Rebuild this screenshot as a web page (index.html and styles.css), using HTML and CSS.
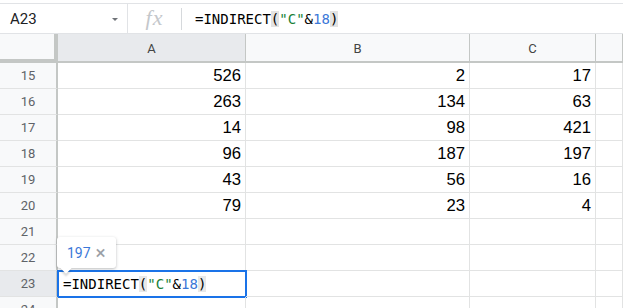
FILE: index.html
```html
<!DOCTYPE html>
<html lang="en">
<head>
    <meta charset="UTF-8">
    <meta name="viewport" content="width=device-width, initial-scale=1.0">
    <title>Sheet</title>
    <link rel="stylesheet" href="styles.css">
</head>
<body>
    <div class="formula-bar">
        <div class="name-box">
            <span class="cell-ref">A23</span>
            <span class="caret"></span>
        </div>
        <div class="fx">fx</div>
        <div class="fx-sep"></div>
        <div class="formula">=INDIRECT<span class="paren">(</span><span class="str">"C"</span>&amp;<span class="num">18</span><span class="paren">)</span></div>
    </div>

    <div class="sheet">
        <div class="grid">
            <div class="corner"></div>
            <div class="col-head active">A</div>
            <div class="col-head">B</div>
            <div class="col-head">C</div>
            <div class="col-head"></div>

            <div class="row-head">15</div><div class="cell">526</div><div class="cell">2</div><div class="cell">17</div><div class="cell"></div>
            <div class="row-head">16</div><div class="cell">263</div><div class="cell">134</div><div class="cell">63</div><div class="cell"></div>
            <div class="row-head">17</div><div class="cell">14</div><div class="cell">98</div><div class="cell">421</div><div class="cell"></div>
            <div class="row-head">18</div><div class="cell">96</div><div class="cell">187</div><div class="cell">197</div><div class="cell"></div>
            <div class="row-head">19</div><div class="cell">43</div><div class="cell">56</div><div class="cell">16</div><div class="cell"></div>
            <div class="row-head">20</div><div class="cell">79</div><div class="cell">23</div><div class="cell">4</div><div class="cell"></div>
            <div class="row-head">21</div><div class="cell"></div><div class="cell"></div><div class="cell"></div><div class="cell"></div>
            <div class="row-head">22</div><div class="cell"></div><div class="cell"></div><div class="cell"></div><div class="cell"></div>
            <div class="row-head active">23</div>
            <div class="cell editing">=INDIRECT<span class="paren">(</span><span class="str">"C"</span>&amp;<span class="num">18</span><span class="paren">)</span></div>
            <div class="cell"></div><div class="cell"></div><div class="cell"></div>
            <div class="row-head">24</div><div class="cell"></div><div class="cell"></div><div class="cell"></div><div class="cell"></div>
        </div>

        <div class="tooltip">
            <span class="tip-value">197</span>
            <span class="tip-close">&times;</span>
        </div>
    </div>
</body>
</html>
```

FILE: styles.css
```css
body {
    margin: 0;
    font-family: 'Roboto', 'Liberation Sans', sans-serif;
    background-color: #fff;
    color: #202124;
    overflow: hidden;
}

/* formula bar */
.formula-bar {
    display: flex;
    align-items: center;
    height: 29px;
    margin-top: 3px;
    border-top: 1px solid #e1e3e6;
    border-bottom: 1px solid #e1e3e6;
}

.name-box {
    display: flex;
    align-items: center;
    justify-content: space-between;
    width: 128px;
    height: 100%;
    padding: 0 9px 0 10px;
    box-sizing: border-box;
    border-right: 1px solid #e1e3e6;
}

.cell-ref {
    font-size: 15px;
    color: #202124;
}

.caret {
    width: 0;
    height: 0;
    border-left: 3px solid transparent;
    border-right: 3px solid transparent;
    border-top: 3px solid #6f7378;
    margin-top: 1px;
}

.fx {
    width: 53px;
    text-align: center;
    font-family: 'Liberation Serif', serif;
    font-style: italic;
    font-size: 22px;
    color: #c4c7cb;
    letter-spacing: 1px;
    margin-top: -2px;
}

.fx-sep {
    width: 1px;
    height: 22px;
    background-color: #d6d9dc;
}

.formula {
    margin-left: 13px;
    font-family: 'DejaVu Sans Mono', monospace;
    font-size: 14px;
    color: #000;
}

.paren {
    background-color: #e3e3e3;
}

.str {
    color: #188038;
}

.num {
    color: #3b78d8;
}

/* sheet grid */
.sheet {
    position: relative;
}

.grid {
    display: grid;
    grid-template-columns: 58px 188px 224px 126px 1fr;
    grid-template-rows: 29px repeat(9, 26px) 26px;
}

.corner {
    background-color: #f8f9fa;
    border-right: 4px solid #c4c7c5;
    border-bottom: 4px solid #c4c7c5;
    box-sizing: border-box;
}

.col-head {
    display: flex;
    align-items: center;
    justify-content: center;
    background-color: #f8f9fa;
    border-right: 1px solid #c4c7c5;
    border-bottom: 2px solid #c4c7c5;
    font-size: 13px;
    color: #444;
    box-sizing: border-box;
    padding-top: 1px;
}

.col-head.active,
.row-head.active {
    background-color: #e8eaed;
}

.row-head {
    display: flex;
    align-items: center;
    justify-content: center;
    background-color: #f8f9fa;
    border-right: 2px solid #c4c7c5;
    border-bottom: 1px solid #e2e3e3;
    font-size: 13px;
    color: #5f6368;
    box-sizing: border-box;
}

.cell {
    display: flex;
    align-items: flex-end;
    justify-content: flex-end;
    padding: 0 4px 2px 0;
    border-right: 1px solid #e2e3e3;
    border-bottom: 1px solid #e2e3e3;
    font-family: 'Liberation Sans', Arial, sans-serif;
    font-size: 16.7px;
    color: #000;
    box-sizing: border-box;
}

.cell.editing {
    justify-content: flex-start;
    align-items: center;
    padding: 0 0 0 5px;
    font-family: 'DejaVu Sans Mono', monospace;
    font-size: 14px;
    outline: 2px solid #1a73e8;
    outline-offset: -1px;
}

.cell.editing .paren {
    background-color: #e8e8e8;
}

/* result preview bubble */
.tooltip {
    position: absolute;
    left: 57px;
    top: 203px;
    display: flex;
    align-items: center;
    gap: 5px;
    height: 31px;
    padding: 0 10px 0 10px;
    background-color: #fff;
    border-radius: 3px;
    box-shadow: 0 1px 3px rgba(60, 64, 67, 0.35);
    box-sizing: border-box;
}

.tooltip::after {
    content: '';
    position: absolute;
    left: 5px;
    bottom: -4px;
    width: 8px;
    height: 8px;
    background-color: #fff;
    transform: rotate(45deg);
    box-shadow: 2px 2px 2px rgba(60, 64, 67, 0.2);
}

.tip-value {
    font-size: 14px;
    color: #3b78d8;
}

.tip-close {
    font-size: 19px;
    line-height: 1;
    color: #9aa0a6;
}
```
